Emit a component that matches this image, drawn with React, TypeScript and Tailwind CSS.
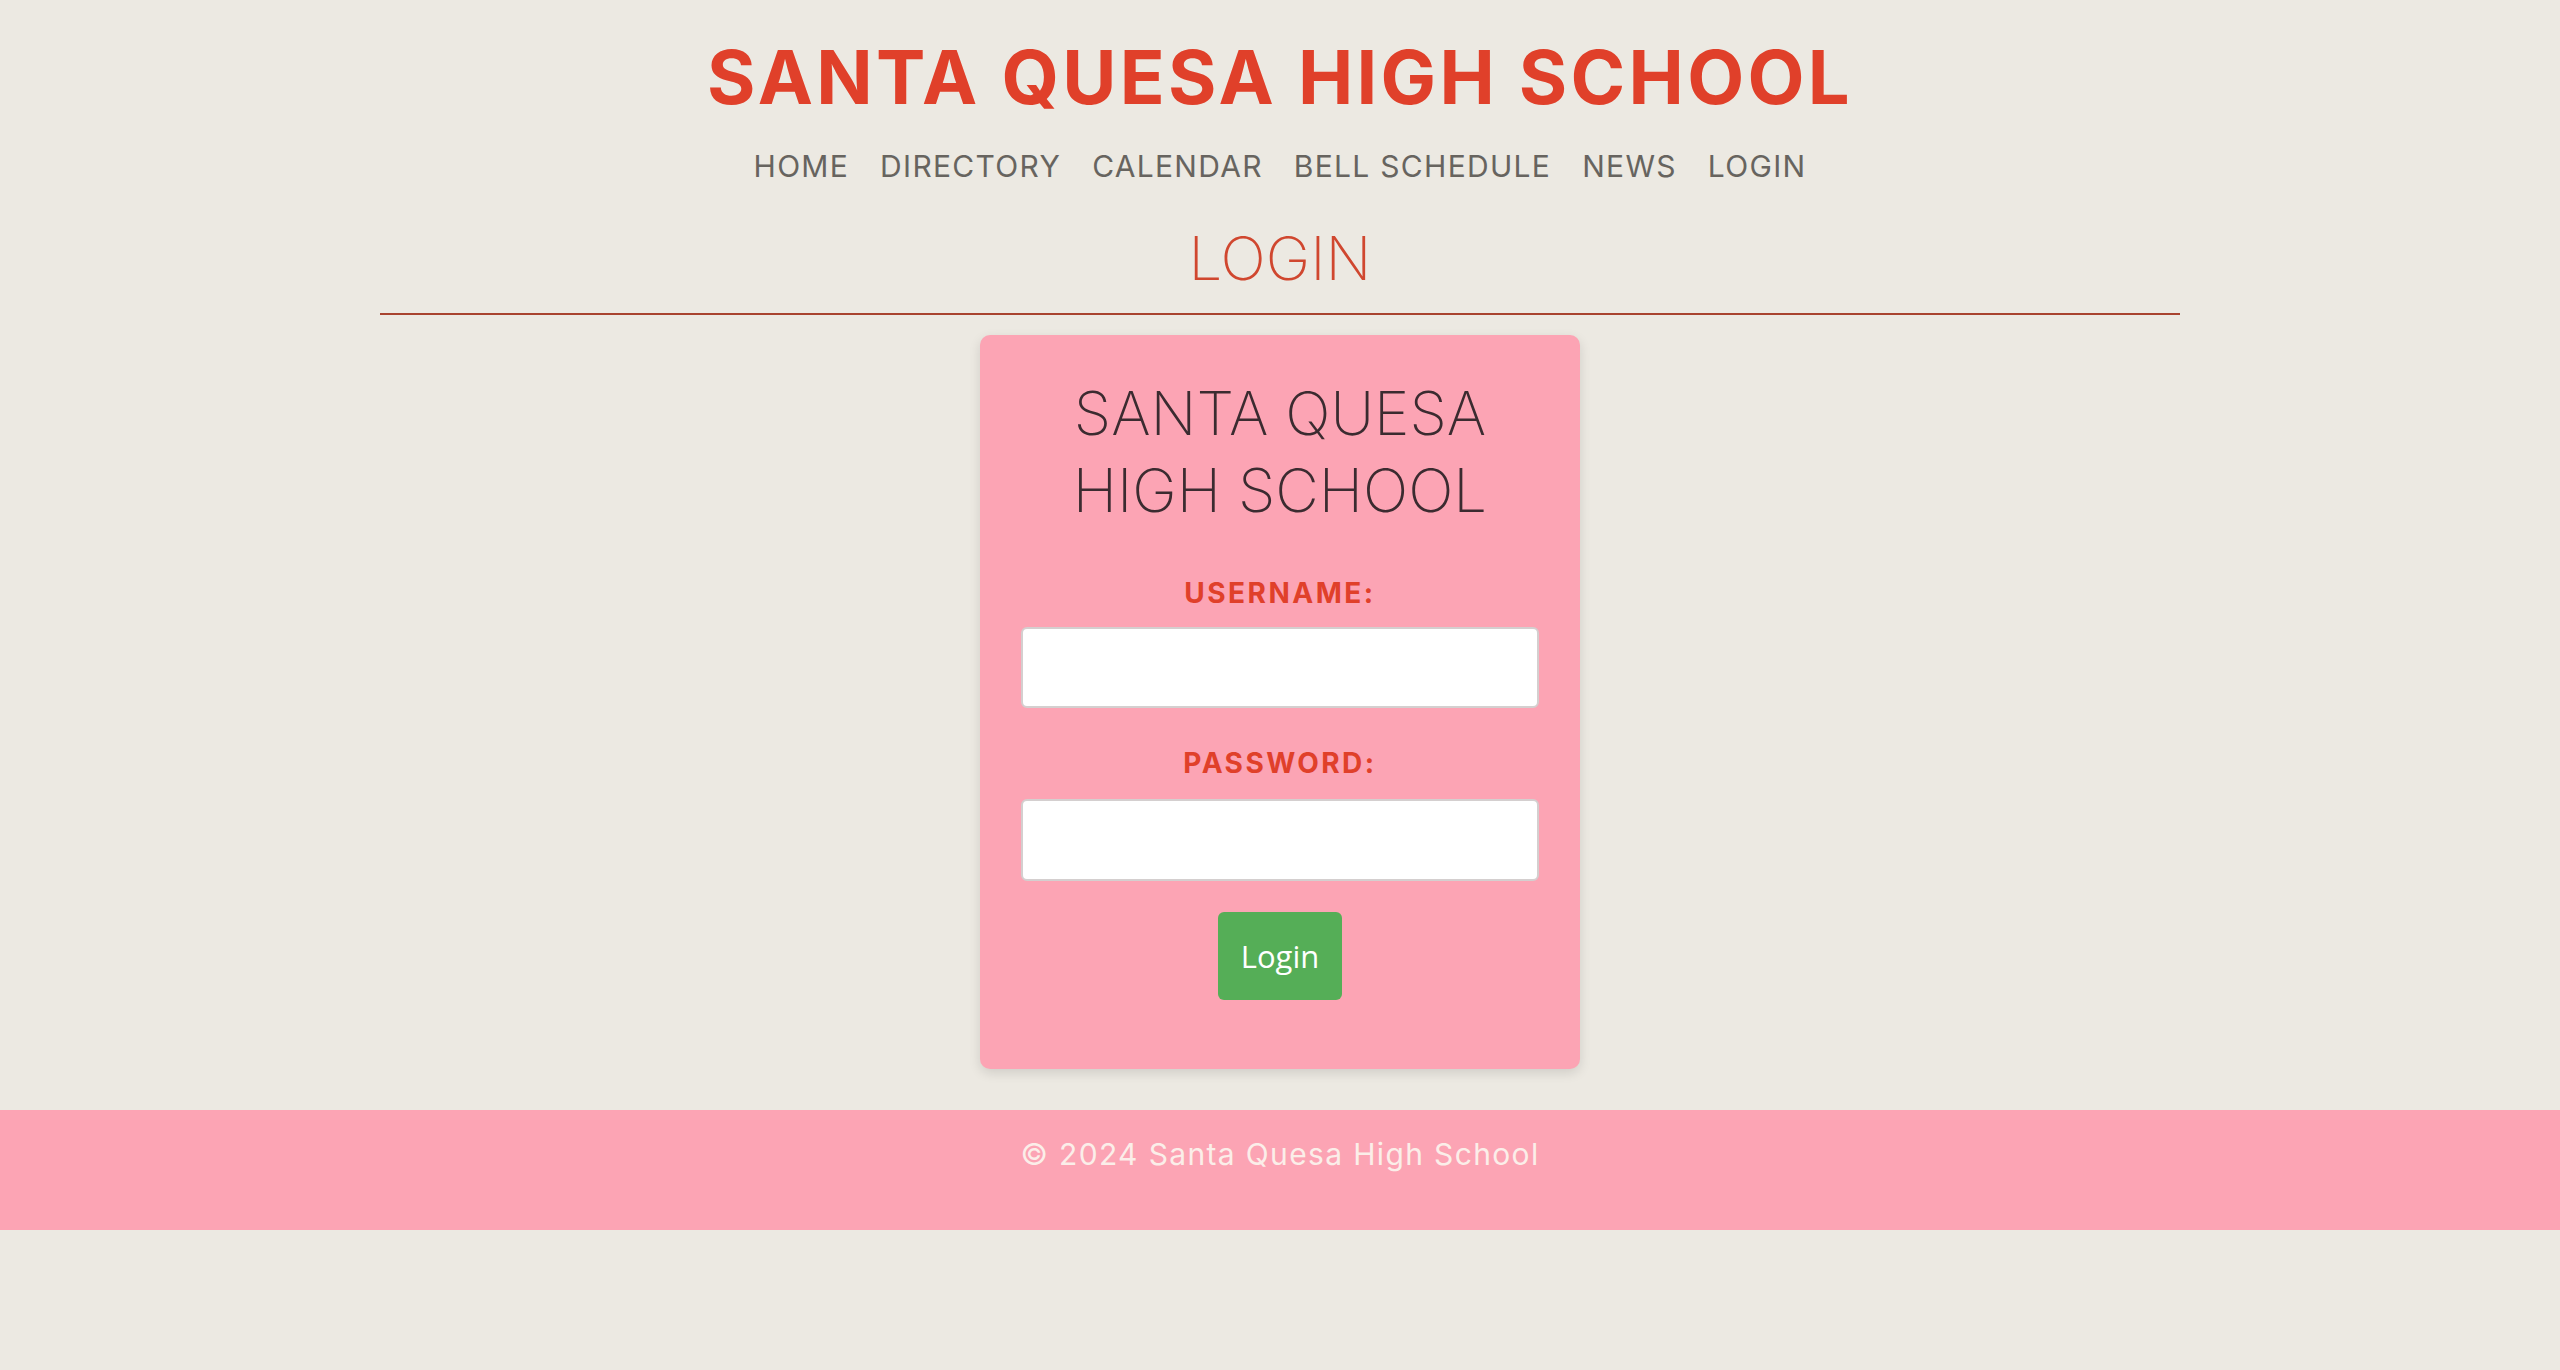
import React from "react";

export default function App() {
  return (
    <div className="min-h-[1370px] w-full bg-[#ece9e2] font-['Inter',sans-serif]">
      <header className="flex flex-col items-center pt-[40px]">
        <h1 className="text-[74px] font-bold leading-none tracking-[3.3px] text-[#e0402a]">
          SANTA QUESA HIGH SCHOOL
        </h1>
        <nav className="mt-[34px] flex gap-[31px] text-[30px] leading-[36px] tracking-[1.3px] text-[#67645f]">
          <a>HOME</a>
          <a>DIRECTORY</a>
          <a>CALENDAR</a>
          <a>BELL SCHEDULE</a>
          <a>NEWS</a>
          <a>LOGIN</a>
        </nav>
      </header>
      <main className="mx-auto mt-[36px] flex w-[1800px] flex-col items-center">
        <h2 className="text-[60px] font-extralight leading-[77px] text-[#d0472f]">LOGIN</h2>
        <div className="mt-[16px] h-[2px] w-full bg-[#a8432f]" />
        <div className="mt-[20px] flex w-[600px] flex-col items-center rounded-[10px] bg-[#fca4b4] px-[40px] pb-[69px] pt-[40px] shadow-[0_4px_12px_rgba(0,0,0,0.12)]">
          <h3 className="text-center text-[60px] font-extralight leading-[77px] text-[#3b2b30]">
            SANTA QUESA
            <br />
            HIGH SCHOOL
          </h3>
          <label className="mt-[47px] text-[28px] font-bold leading-[34px] tracking-[2.5px] text-[#e0402a]">
            USERNAME:
          </label>
          <div className="mt-[17px] h-[81px] w-[518px] rounded-[6px] border-2 border-[#d4cfcf] bg-white" />
          <label className="mt-[38px] text-[28px] font-bold leading-[34px] tracking-[2.5px] text-[#e0402a]">
            PASSWORD:
          </label>
          <div className="mt-[19px] h-[82px] w-[518px] rounded-[6px] border-2 border-[#d4cfcf] bg-white" />
          <button className="mt-[31px] flex h-[88px] w-[124px] items-center justify-center rounded-[6px] bg-[#55ae57] font-['Open_Sans',sans-serif] text-[31px] text-white">
            Login
          </button>
        </div>
      </main>
      <footer className="mt-[41px] h-[120px] bg-[#fca4b4] pt-[26px] text-center text-[30px] leading-[36px] tracking-[1.35px] text-[#fbeee9]">
        © 2024 Santa Quesa High School
      </footer>
    </div>
  );
}
